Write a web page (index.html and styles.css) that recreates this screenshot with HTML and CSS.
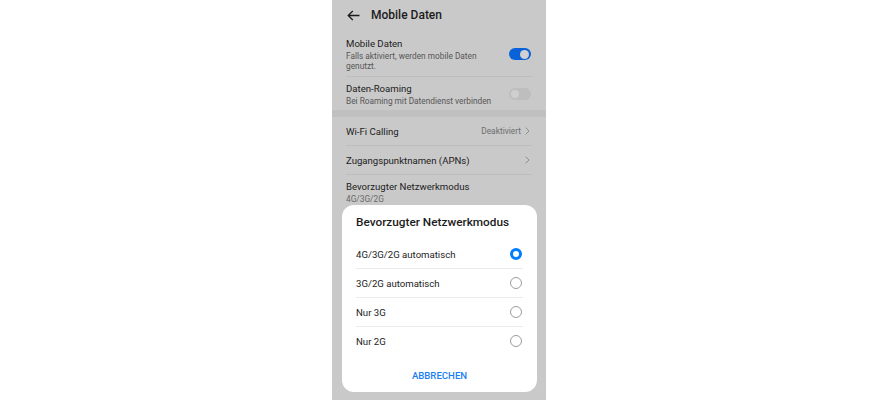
FILE: index.html
```html
<!DOCTYPE html>
<html lang="de">
<head>
<meta charset="UTF-8">
<title>Mobile Daten</title>
<link rel="stylesheet" href="styles.css">
</head>
<body>
<div class="phone">
	<div class="topbar">
		<svg class="back" width="13" height="11" viewBox="0 0 13 11"><path d="M12.5 5.5H1.2M5.8 1L1.2 5.5L5.8 10" fill="none" stroke="#1c1c1c" stroke-width="1.3"/></svg>
		<span class="topbar_title">Mobile Daten</span>
	</div>
	<div class="group">
		<div class="row row_first">
			<div class="row_text">
				<div class="row_title">Mobile Daten</div>
				<div class="row_sub">Falls aktiviert, werden mobile Daten genutzt.</div>
			</div>
			<span class="switch switch_on"><i></i></span>
		</div>
		<div class="row row_second">
			<div class="row_text">
				<div class="row_title">Daten-Roaming</div>
				<div class="row_sub">Bei Roaming mit Datendienst verbinden</div>
			</div>
			<span class="switch"><i></i></span>
		</div>
	</div>
	<div class="band"></div>
	<div class="group">
		<div class="row row_link">
			<span class="row_title">Wi-Fi Calling</span>
			<span class="row_value">Deaktiviert<svg class="chev" width="5" height="8" viewBox="0 0 5 8"><path d="M0.6 0.6L4 4L0.6 7.4" fill="none" stroke="#8a8a8a" stroke-width="0.9"/></svg></span>
		</div>
		<div class="row row_link">
			<span class="row_title">Zugangspunktnamen (APNs)</span>
			<span class="row_value"><svg class="chev" width="5" height="8" viewBox="0 0 5 8"><path d="M0.6 0.6L4 4L0.6 7.4" fill="none" stroke="#8a8a8a" stroke-width="0.9"/></svg></span>
		</div>
		<div class="row row_last">
			<div class="row_text">
				<div class="row_title">Bevorzugter Netzwerkmodus</div>
				<div class="row_sub">4G/3G/2G</div>
			</div>
		</div>
	</div>

	<div class="dialog">
		<div class="dialog_title">Bevorzugter Netzwerkmodus</div>
		<ul class="options">
			<li><span>4G/3G/2G automatisch</span><i class="radio radio_on"></i></li>
			<li><span>3G/2G automatisch</span><i class="radio"></i></li>
			<li><span>Nur 3G</span><i class="radio"></i></li>
			<li><span>Nur 2G</span><i class="radio"></i></li>
		</ul>
		<div class="dialog_btn">ABBRECHEN</div>
	</div>
</div>
</body>
</html>
```

FILE: styles.css
```css
html, body, div, ul, li { margin:0; padding:0; }
body { background:#fff; font-family:Roboto,"Noto Sans",sans-serif; color:#1c1c1c; }
ul li { list-style:none; }

.phone { position:relative; width:214px; height:400px; margin-left:332px; background:#c9c9c9; overflow:hidden; }

.topbar { display:flex; align-items:center; height:30px; padding-left:15px; }
.back { margin-right:11px; }
.topbar_title { font-size:12px; font-weight:500; }

.group { padding:0 14px; }
.row { display:flex; align-items:center; justify-content:space-between; border-bottom:1px solid #bdbdbd; }
.row_first { padding:7px 0 5px; }
.row_second { padding:5px 0 4px; border-bottom:none; }
.row_link { height:28px; }
.row_last { padding:5px 0; border-bottom:none; }
.row_text { width:150px; }
.row_title { font-size:9.6px; line-height:13px; }
.row_sub { margin-top:1px; font-size:8.3px; line-height:10px; color:#565656; }
.row_last .row_sub { color:#6a6a6a; }
.row_value { display:flex; align-items:center; font-size:8.4px; color:#6e6e6e; }
.chev { margin-left:4px; margin-right:2px; }

.band { height:7px; background:#c0c0c0; }

.switch { position:relative; display:block; width:22px; height:12px; margin-right:1px; border-radius:6px; background:#bebebe; }
.switch i { position:absolute; left:2px; top:2px; width:8px; height:8px; border-radius:50%; background:#cfcfcf; }
.switch_on { background:#0a62d8; }
.switch_on i { left:auto; right:2px; width:9px; height:9px; top:1.5px; background:#d0d0d0; }

.dialog { position:absolute; left:10px; top:205px; width:195px; height:187px; background:#fff; border-radius:12px; padding:0 14px; box-sizing:border-box; }
.dialog_title { padding-top:9px; margin-bottom:10px; font-size:11.8px; line-height:16px; font-weight:500; white-space:nowrap; }
.options li { display:flex; align-items:center; justify-content:space-between; height:28px; border-bottom:1px solid #ebebeb; font-size:9.6px; }
.options li:last-child { border-bottom:none; }
.radio { display:block; width:12px; height:12px; margin-right:1px; box-sizing:border-box; border:1px solid #9c9c9c; border-radius:50%; }
.radio_on { border:3px solid #007dff; }
.dialog_btn { margin-top:15px; text-align:center; font-size:9.6px; font-weight:500; color:#1a7ff2; }
```
